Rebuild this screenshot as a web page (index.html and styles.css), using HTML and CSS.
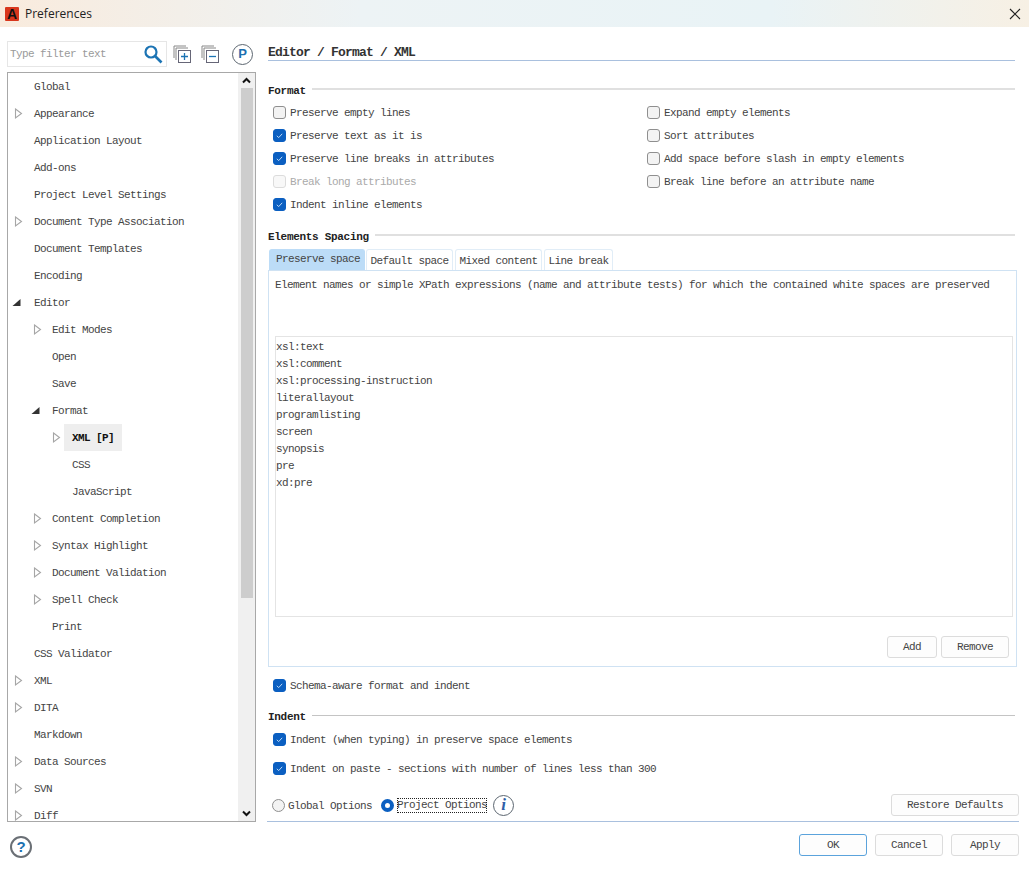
FILE: index.html
```html
<!DOCTYPE html>
<html lang="en">
<head>
    <meta charset="UTF-8">
    <title>Preferences</title>
    <link rel="stylesheet" href="styles.css">
</head>
<body>
    <svg class="defs" width="0" height="0">
        <symbol id="closed" viewBox="0 0 9 13"><path d="M1.5 2 L7.5 6.5 L1.5 11 Z" fill="#fff" stroke="#a6a6a6" stroke-width="1.1"/></symbol>
        <symbol id="open" viewBox="0 0 9 13"><path d="M0.5 10 L8.5 10 L8.5 3 Z" fill="#333"/></symbol>
        <symbol id="tick" viewBox="0 0 13 13"><path d="M3.8 6.8 L5.7 8.6 L9.2 4.8" fill="none" stroke="#bcd8f5" stroke-width="1"/></symbol>
    </svg>

    <div class="titlebar">
        <span class="app-logo">A</span>
        <span class="title-text">Preferences</span>
        <svg class="close" width="12" height="12" viewBox="0 0 12 12"><path d="M1 1 L11 11 M11 1 L1 11" stroke="#222" stroke-width="1.1"/></svg>
    </div>

    <div class="main">
        <!-- left side -->
        <div class="sidebar">
            <div class="filter-row">
                <div class="filter">
                    <span class="filter-text">Type filter text</span>
                    <svg width="20" height="20" viewBox="0 0 20 20"><circle cx="8" cy="8" r="5.5" fill="none" stroke="#1c74b4" stroke-width="2.2"/><path d="M12 12 L18.5 18.5" stroke="#1c74b4" stroke-width="2.6"/></svg>
                </div>
                <svg class="tool" width="18" height="18" viewBox="0 0 18 18"><path d="M1 13 V1 H13" fill="none" stroke="#888" stroke-width="1"/><path d="M3 15 V3 H15" fill="#fff" stroke="#888" stroke-width="1"/><rect x="5.5" y="5.5" width="12" height="12" fill="#fff" stroke="#667" stroke-width="1"/><path d="M8 11.5 H15 M11.5 8 V15" stroke="#1c74b4" stroke-width="1.3"/></svg>
                <svg class="tool tool2" width="18" height="18" viewBox="0 0 18 18"><path d="M1 13 V1 H13" fill="none" stroke="#888" stroke-width="1"/><path d="M3 15 V3 H15" fill="#fff" stroke="#888" stroke-width="1"/><rect x="5.5" y="5.5" width="12" height="12" fill="#fff" stroke="#667" stroke-width="1"/><path d="M8 11.5 H15" stroke="#1c74b4" stroke-width="1.3"/></svg>
                <span class="p-badge">P</span>
            </div>

            <div class="tree-box">
                <ul class="tree">
                    <li class="lv0"><span class="arrow"></span><span class="label">Global</span></li>
                    <li class="lv0"><svg class="arrow"><use href="#closed"/></svg><span class="label">Appearance</span></li>
                    <li class="lv0"><span class="arrow"></span><span class="label">Application Layout</span></li>
                    <li class="lv0"><span class="arrow"></span><span class="label">Add-ons</span></li>
                    <li class="lv0"><span class="arrow"></span><span class="label">Project Level Settings</span></li>
                    <li class="lv0"><svg class="arrow"><use href="#closed"/></svg><span class="label">Document Type Association</span></li>
                    <li class="lv0"><span class="arrow"></span><span class="label">Document Templates</span></li>
                    <li class="lv0"><span class="arrow"></span><span class="label">Encoding</span></li>
                    <li class="lv0"><svg class="arrow expanded"><use href="#open"/></svg><span class="label">Editor</span></li>
                    <li class="lv1"><svg class="arrow"><use href="#closed"/></svg><span class="label">Edit Modes</span></li>
                    <li class="lv1"><span class="arrow"></span><span class="label">Open</span></li>
                    <li class="lv1"><span class="arrow"></span><span class="label">Save</span></li>
                    <li class="lv1"><svg class="arrow expanded"><use href="#open"/></svg><span class="label">Format</span></li>
                    <li class="lv2"><svg class="arrow"><use href="#closed"/></svg><span class="label selected">XML [P]</span></li>
                    <li class="lv2"><span class="arrow"></span><span class="label">CSS</span></li>
                    <li class="lv2"><span class="arrow"></span><span class="label">JavaScript</span></li>
                    <li class="lv1"><svg class="arrow"><use href="#closed"/></svg><span class="label">Content Completion</span></li>
                    <li class="lv1"><svg class="arrow"><use href="#closed"/></svg><span class="label">Syntax Highlight</span></li>
                    <li class="lv1"><svg class="arrow"><use href="#closed"/></svg><span class="label">Document Validation</span></li>
                    <li class="lv1"><svg class="arrow"><use href="#closed"/></svg><span class="label">Spell Check</span></li>
                    <li class="lv1"><span class="arrow"></span><span class="label">Print</span></li>
                    <li class="lv0"><span class="arrow"></span><span class="label">CSS Validator</span></li>
                    <li class="lv0"><svg class="arrow"><use href="#closed"/></svg><span class="label">XML</span></li>
                    <li class="lv0"><svg class="arrow"><use href="#closed"/></svg><span class="label">DITA</span></li>
                    <li class="lv0"><span class="arrow"></span><span class="label">Markdown</span></li>
                    <li class="lv0"><svg class="arrow"><use href="#closed"/></svg><span class="label">Data Sources</span></li>
                    <li class="lv0"><svg class="arrow"><use href="#closed"/></svg><span class="label">SVN</span></li>
                    <li class="lv0"><svg class="arrow"><use href="#closed"/></svg><span class="label">Diff</span></li>
                </ul>
                <div class="scrollbar">
                    <svg class="scroll-arrow" width="9" height="7" viewBox="0 0 9 7"><path d="M1 5.5 L4.5 2 L8 5.5" fill="none" stroke="#111" stroke-width="2"/></svg>
                    <div class="thumb"></div>
                    <div class="track"></div>
                    <svg class="scroll-arrow" width="9" height="7" viewBox="0 0 9 7"><path d="M1 1.5 L4.5 5 L8 1.5" fill="none" stroke="#111" stroke-width="2"/></svg>
                </div>
            </div>
        </div>

        <!-- right side -->
        <div class="content">
            <div class="page-title">Editor / Format / XML</div>

            <div class="section-head first"><span>Format</span><i class="rule thick"></i></div>
            <div class="options">
                <div class="opt"><span class="check"></span>Preserve empty lines</div>
                <div class="opt"><span class="check"></span>Expand empty elements</div>
                <div class="opt"><span class="check on"><svg width="13" height="13"><use href="#tick"/></svg></span>Preserve text as it is</div>
                <div class="opt"><span class="check"></span>Sort attributes</div>
                <div class="opt"><span class="check on"><svg width="13" height="13"><use href="#tick"/></svg></span>Preserve line breaks in attributes</div>
                <div class="opt"><span class="check"></span>Add space before slash in empty elements</div>
                <div class="opt disabled"><span class="check"></span>Break long attributes</div>
                <div class="opt"><span class="check"></span>Break line before an attribute name</div>
                <div class="opt"><span class="check on"><svg width="13" height="13"><use href="#tick"/></svg></span>Indent inline elements</div>
            </div>

            <div class="section-head spacing"><span>Elements Spacing</span><i class="rule thick"></i></div>
            <div class="tabs">
                <div class="tab active">Preserve space</div>
                <div class="tab">Default space</div>
                <div class="tab">Mixed content</div>
                <div class="tab">Line break</div>
            </div>
            <div class="panel">
                <p class="panel-desc">Element names or simple XPath expressions (name and attribute tests) for which the contained white spaces are preserved</p>
                <div class="name-list">
                    <div>xsl:text</div>
                    <div>xsl:comment</div>
                    <div>xsl:processing-instruction</div>
                    <div>literallayout</div>
                    <div>programlisting</div>
                    <div>screen</div>
                    <div>synopsis</div>
                    <div>pre</div>
                    <div>xd:pre</div>
                </div>
                <div class="panel-buttons">
                    <button class="btn btn-add">Add</button>
                    <button class="btn btn-remove">Remove</button>
                </div>
            </div>

            <div class="opt schema"><span class="check on"><svg width="13" height="13"><use href="#tick"/></svg></span>Schema-aware format and indent</div>

            <div class="section-head indent"><span>Indent</span><i class="rule"></i></div>
            <div class="opt indent-opt"><span class="check on"><svg width="13" height="13"><use href="#tick"/></svg></span>Indent (when typing) in preserve space elements</div>
            <div class="opt indent-opt second"><span class="check on"><svg width="13" height="13"><use href="#tick"/></svg></span>Indent on paste - sections with number of lines less than 300</div>

            <div class="scope-row">
                <span class="radio"></span><span class="radio-text">Global Options</span>
                <span class="radio on"></span><span class="radio-text focused">Project Options</span>
                <span class="info">i</span>
                <button class="btn btn-restore">Restore Defaults</button>
            </div>
        </div>
    </div>

    <div class="footer">
        <span class="help">?</span>
        <button class="btn btn-foot default">OK</button>
        <button class="btn btn-foot">Cancel</button>
        <button class="btn btn-foot">Apply</button>
    </div>
</body>
</html>
```
FILE: styles.css
```css
* {
    margin: 0;
    padding: 0;
    box-sizing: border-box;
}

body {
    width: 1029px;
    height: 869px;
    overflow: hidden;
    background-color: #fff;
    color: #444;
    font-family: "Liberation Mono", "Noto Sans CJK SC", monospace;
    font-size: 11px;
    letter-spacing: -0.6px;
}

.defs {
    display: block;
    height: 0;
}

/* title bar */
.titlebar {
    height: 27px;
    display: flex;
    align-items: center;
    padding-left: 5px;
    background: linear-gradient(90deg, #f9ebdd 0, #edf3f5 35%, #e9f3f6 75%, #f7f0e4 100%);
}

.app-logo {
    width: 14px;
    height: 14px;
    background-color: #d8361c;
    color: #111;
    font-family: "Liberation Sans", sans-serif;
    font-weight: bold;
    font-size: 14px;
    line-height: 14px;
    letter-spacing: 0;
    text-align: center;
    border-radius: 1px;
}

.title-text {
    margin-left: 6px;
    color: #222;
    font-family: "Open Sans", "Liberation Sans", sans-serif;
    font-size: 12px;
    letter-spacing: 0;
}

.close {
    margin-left: auto;
    margin-right: 8px;
}

.main {
    height: 807px;
    display: flex;
    padding: 14px 0 0 7px;
}

/* left side */
.sidebar {
    width: 249px;
    flex: none;
}

.filter-row {
    height: 26px;
    display: flex;
    align-items: center;
}

.filter {
    width: 160px;
    height: 26px;
    display: flex;
    align-items: center;
    justify-content: space-between;
    padding: 0 3px 0 2px;
    border: 1px solid #e6e6e6;
}

.filter-text {
    color: #9a9a9a;
}

.tool {
    margin-left: 6px;
}

.tool2 {
    margin-left: 10px;
}

.p-badge {
    width: 21px;
    height: 21px;
    margin-left: 13px;
    border: 1.5px solid #5c6670;
    border-radius: 50%;
    color: #1c6fb0;
    font-family: "Liberation Sans", sans-serif;
    font-weight: bold;
    font-size: 13px;
    line-height: 18px;
    letter-spacing: 0;
    text-align: center;
}

.tree-box {
    height: 750px;
    margin-top: 5px;
    display: flex;
    overflow: hidden;
    border: 1px solid #a8a8a8;
}

.tree {
    flex: 1;
    list-style: none;
}

.tree li {
    height: 27px;
    display: flex;
    align-items: center;
}

.lv0 {
    padding-left: 6px;
}

.lv1 {
    padding-left: 25px;
}

.lv2 {
    padding-left: 44px;
}

.arrow {
    width: 9px;
    height: 13px;
    flex: none;
}

.arrow.expanded {
    margin: 0 2px 0 -2px;
}

.label {
    height: 27px;
    margin-left: 11px;
    line-height: 29px;
}

.lv1 .label {
    margin-left: 10px;
}

.selected {
    margin-left: 3px !important;
    padding: 0 8px;
    background-color: #eee;
    color: #111;
    font-weight: bold;
}

.scrollbar {
    width: 17px;
    flex: none;
    display: flex;
    flex-direction: column;
    align-items: center;
    background-color: #f0f0f0;
}

.scroll-arrow {
    flex: none;
    margin: 4px 0;
}

.thumb {
    width: 12px;
    height: 510px;
    background-color: #cdcdcd;
}

.track {
    flex: 1;
}

/* right side */
.content {
    width: 751px;
    margin-left: 12px;
    flex: none;
}

.page-title {
    width: 747px;
    height: 20px;
    border-bottom: 1px solid #a9c0de;
    color: #333;
    font-size: 13px;
    font-weight: bold;
    letter-spacing: -0.8px;
    line-height: 23px;
}

.section-head {
    width: 747px;
    height: 16px;
    display: flex;
    align-items: center;
    gap: 6px;
    color: #222;
    font-weight: bold;
    letter-spacing: -0.3px;
}

.section-head span {
    height: 16px;
    padding-top: 2px;
    line-height: 14px;
}

.section-head.first {
    margin-top: 21px;
}

.section-head.spacing {
    margin-top: 12px;
}

.section-head.indent {
    margin-top: 11px;
}

.rule {
    flex: 1;
    height: 1px;
    margin-top: -2px;
    background-color: #c4c4c4;
}

.rule.thick {
    height: 2px;
    background-color: #e0e0e0;
}

.options {
    display: grid;
    grid-template-columns: 374px 1fr;
    grid-auto-rows: 23px;
    margin-top: 3px;
}

.opt {
    height: 23px;
    display: flex;
    align-items: center;
    padding-left: 5px;
}

.opt.disabled {
    color: #aaa;
}

.check {
    width: 13px;
    height: 13px;
    margin-right: 4px;
    flex: none;
    display: block;
    background-color: #f3f3f3;
    border: 1px solid #8f8f8f;
    border-radius: 3px;
}

.check svg {
    display: block;
    margin: -1px;
}

.check.on {
    background-color: #0b5fc1;
    border-color: #0b5fc1;
}

.disabled .check {
    background-color: #f8f8f8;
    border-color: #dcdcdc;
}

/* tabs */
.tabs {
    display: flex;
    height: 21px;
    margin-top: 5px;
    padding-left: 1px;
    gap: 2px;
}

.tab {
    padding: 0 3.5px;
    line-height: 22px;
    border: 1px solid #e1edf7;
    border-bottom: none;
    border-radius: 3px 3px 0 0;
}

.tab.active {
    width: 96px;
    padding: 0 6px;
    margin-right: -1px;
    white-space: nowrap;
    line-height: 18px;
    background-color: #bcdcf7;
    border-color: #bcdcf7;
}

.panel {
    width: 749px;
    height: 397px;
    padding: 7px 6px 0;
    border: 1px solid #cfe2f3;
}

.panel-desc {
    height: 58px;
    line-height: 14px;
    white-space: nowrap;
}

.name-list {
    width: 738px;
    height: 281px;
    padding-top: 2px;
    border: 1px solid #e4e4e4;
    line-height: 17px;
}

.panel-buttons {
    display: flex;
    justify-content: flex-end;
    gap: 4px;
    margin-top: 19px;
    padding-right: 1px;
}

.btn {
    height: 22px;
    background-color: #fdfdfd;
    border: 1px solid #dcdcdc;
    border-radius: 3px;
    color: #444;
    font-family: inherit;
    font-size: inherit;
    letter-spacing: inherit;
}

.btn-add {
    width: 50px;
}

.btn-remove {
    width: 68px;
}

.schema {
    margin-top: 7px;
}

.indent-opt {
    margin-top: 4px;
}

.indent-opt.second {
    margin-top: 6px;
}

.scope-row {
    height: 22px;
    margin-top: 14px;
    display: flex;
    align-items: center;
    padding-left: 4px;
}

.radio {
    width: 13px;
    height: 13px;
    flex: none;
    background-color: #f3f3f3;
    border: 1px solid #8f8f8f;
    border-radius: 50%;
}

.radio.on {
    margin-left: 9px;
    background-color: #fff;
    border: 4px solid #0b5fc1;
}

.radio-text {
    margin-left: 3px;
    padding-top: 1px;
}

.focused {
    width: 90px;
    height: 15px;
    padding-top: 0;
    overflow: hidden;
    white-space: nowrap;
    line-height: 14px;
    outline: 1px dotted #222;
    outline-offset: -1px;
}

.info {
    width: 21px;
    height: 21px;
    margin-left: 6px;
    border: 1.5px solid #5c6670;
    border-radius: 50%;
    color: #2f5fa8;
    font-family: "Liberation Serif", serif;
    font-style: italic;
    font-weight: bold;
    font-size: 17px;
    line-height: 18px;
    letter-spacing: 0;
    text-align: center;
}

.btn-restore {
    width: 128px;
    margin-left: auto;
}

/* bottom buttons */
.footer {
    height: 22px;
    display: flex;
    align-items: center;
    gap: 8px;
    padding-left: 10px;
    position: relative;
}

/* line under the right column */
.footer::before {
    content: "";
    position: absolute;
    left: 267px;
    top: -13px;
    width: 752px;
    height: 1px;
    background-color: #a9c0de;
}

.help {
    width: 22px;
    height: 22px;
    margin: 2px auto 0 0;
    align-self: flex-start;
    border: 2px solid #6a6f75;
    border-radius: 50%;
    color: #1c6fb0;
    font-family: "Liberation Sans", sans-serif;
    font-weight: bold;
    font-size: 15px;
    line-height: 18px;
    letter-spacing: 0;
    text-align: center;
}

.btn-foot {
    width: 68px;
}

.btn-foot:last-child {
    margin-right: 10px;
}

.default {
    border-color: #5ba3dc;
}
```
